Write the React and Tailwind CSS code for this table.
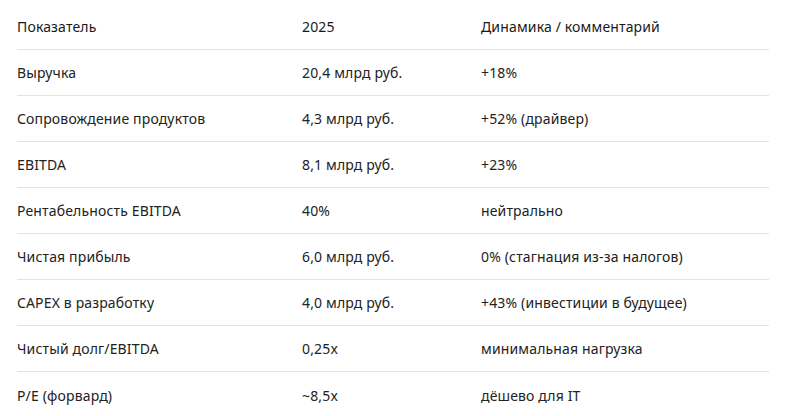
import React from 'react';

const rows = [
  ['Выручка', '20,4 млрд руб.', '+18%'],
  ['Сопровождение продуктов', '4,3 млрд руб.', '+52% (драйвер)'],
  ['EBITDA', '8,1 млрд руб.', '+23%'],
  ['Рентабельность EBITDA', '40%', 'нейтрально'],
  ['Чистая прибыль', '6,0 млрд руб.', '0% (стагнация из-за налогов)'],
  ['CAPEX в разработку', '4,0 млрд руб.', '+43% (инвестиции в будущее)'],
  ['Чистый долг/EBITDA', '0,25x', 'минимальная нагрузка'],
  ['P/E (форвард)', '~8,5x', 'дёшево для IT'],
];

const App = () => {
  return (
    <div className="w-[796px] h-[416px] bg-white overflow-hidden text-[14px] tracking-[0.15px] text-[#222]" style={{ fontFamily: '"Noto Sans", sans-serif' }}>
      <div className="ml-[17px] w-[752px]">
        <div className="grid grid-cols-[285px_179px_1fr] h-[50px] items-center pt-[4px] border-b border-[#e3e3e3] font-[450] text-[#1a1a1a]">
          <div>Показатель</div>
          <div>2025</div>
          <div>Динамика / комментарий</div>
        </div>
        {rows.map((r, i) => (
          <div
            key={i}
            className={`grid grid-cols-[285px_179px_1fr] h-[46px] items-center ${i < rows.length - 1 ? 'border-b border-[#e3e3e3]' : ''}`}
          >
            <div>{r[0]}</div>
            <div>{r[1]}</div>
            <div>{r[2]}</div>
          </div>
        ))}
      </div>
    </div>
  );
};

export default App;
